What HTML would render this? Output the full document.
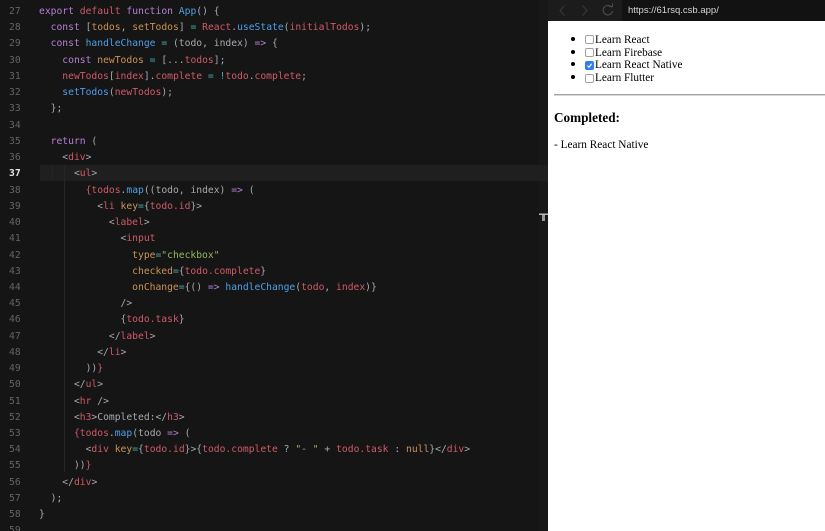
<!DOCTYPE html>
<html><head><meta charset="utf-8"><style>
html,body{margin:0;padding:0;width:825px;height:531px;overflow:hidden;background:#151516}
#ed{position:absolute;left:0;top:0;width:548px;height:531px;background:#151516;overflow:hidden}
.strip{position:absolute;left:539px;top:0;width:9px;height:531px;background:#181819}
.act{position:absolute;left:40px;top:164.5px;width:508px;height:16px;background:#1f1f20}
.g{position:absolute;width:1px;background:#262627}
.n,.l{position:absolute;font:9.68px/16px "DejaVu Sans Mono","Liberation Mono",monospace;white-space:pre;color:#a6aaaf;filter:blur(.25px)}
.n{left:9px;color:#626467}
.l{left:39px}
.k{color:#b77fd6}.r{color:#cf5a66}.o{color:#cc9255}.b{color:#4f9fe8}.t{color:#45aaa5}.s{color:#96b860}
#br{position:absolute;left:548px;top:0;width:277px;height:531px;background:#fff}
#bar{position:absolute;left:0;top:0;width:277px;height:21px;background:#1c1c1d}
#url{position:absolute;left:74px;top:0;width:203px;height:21px;background:#121213;color:#d4d5d6;font:9.5px/21px "Liberation Sans",sans-serif;text-indent:6px}
#pg{position:absolute;left:0;top:21px;width:277px;font-family:"Liberation Serif",serif;color:#000}
.li{position:absolute;left:47px;font-size:11.25px;line-height:13px;white-space:pre;filter:blur(.2px)}
.dot{position:absolute;left:23px;width:4px;height:4px;border-radius:50%;background:#000}
.cb{position:absolute;left:36.5px;width:7px;height:7px;border:.8px solid #a2a2a2;border-radius:2px;background:#fff}
.cb.on{background:#2f7ff0;border-color:#2f7ff0}
</style></head><body>
<div id="ed">
<div class="strip"></div>
<div class="act"></div>
<div class="g" style="left:52px;top:165px;height:15px"></div>
<div class="g" style="left:64px;top:165px;height:307px"></div>
<svg style="position:absolute;left:539px;top:213px" width="9" height="9"><path d="M0 1.2H9" stroke="#ddd" stroke-width="1.2"/><path d="M4.5 1.5V8" stroke="#999" stroke-width="3"/></svg>
<div class="n" style="top:4px">27</div><div class="l" style="top:4px"><span class="k">export</span> <span class="r">default</span> <span class="k">function</span> <span class="b">App</span>() {</div>
<div class="n" style="top:20px">28</div><div class="l" style="top:20px">  <span class="k">const</span> [<span class="o">todos</span>, <span class="o">setTodos</span>] <span class="t">=</span> <span class="r">React</span>.<span class="b">useState</span>(<span class="r">initialTodos</span>);</div>
<div class="n" style="top:36px">29</div><div class="l" style="top:36px">  <span class="k">const</span> <span class="b">handleChange</span> <span class="t">=</span> (todo, index) <span class="k">=&gt;</span> {</div>
<div class="n" style="top:53px">30</div><div class="l" style="top:53px">    <span class="k">const</span> <span class="o">newTodos</span> <span class="t">=</span> [...<span class="r">todos</span>];</div>
<div class="n" style="top:69px">31</div><div class="l" style="top:69px">    <span class="r">newTodos</span>[<span class="r">index</span>].<span class="r">complete</span> <span class="t">=</span> <span class="t">!</span><span class="r">todo</span>.<span class="r">complete</span>;</div>
<div class="n" style="top:85px">32</div><div class="l" style="top:85px">    <span class="b">setTodos</span>(<span class="r">newTodos</span>);</div>
<div class="n" style="top:101px">33</div><div class="l" style="top:101px">  };</div>
<div class="n" style="top:118px">34</div>
<div class="n" style="top:134px">35</div><div class="l" style="top:134px">  <span class="k">return</span> (</div>
<div class="n" style="top:150px">36</div><div class="l" style="top:150px">    &lt;<span class="r">div</span>&gt;</div>
<div class="n" style="top:166px;color:#e4e4e4;font-weight:bold">37</div><div class="l" style="top:166px">      &lt;<span class="r">ul</span>&gt;</div>
<div class="n" style="top:183px">38</div><div class="l" style="top:183px">        <span class="r">{todos</span>.<span class="b">map</span>((todo, index) <span class="k">=&gt;</span> (</div>
<div class="n" style="top:199px">39</div><div class="l" style="top:199px">          &lt;<span class="r">li</span> <span class="o">key</span><span class="t">=</span>{<span class="r">todo.id</span>}&gt;</div>
<div class="n" style="top:215px">40</div><div class="l" style="top:215px">            &lt;<span class="r">label</span>&gt;</div>
<div class="n" style="top:231px">41</div><div class="l" style="top:231px">              &lt;<span class="r">input</span></div>
<div class="n" style="top:248px">42</div><div class="l" style="top:248px">                <span class="o">type</span><span class="t">=</span><span class="s">"checkbox"</span></div>
<div class="n" style="top:264px">43</div><div class="l" style="top:264px">                <span class="o">checked</span><span class="t">=</span>{<span class="r">todo.complete</span>}</div>
<div class="n" style="top:280px">44</div><div class="l" style="top:280px">                <span class="o">onChange</span><span class="t">=</span>{() <span class="k">=&gt;</span> <span class="b">handleChange</span>(<span class="r">todo</span>, <span class="r">index</span>)}</div>
<div class="n" style="top:296px">45</div><div class="l" style="top:296px">              /&gt;</div>
<div class="n" style="top:312px">46</div><div class="l" style="top:312px">              {<span class="r">todo.task</span>}</div>
<div class="n" style="top:329px">47</div><div class="l" style="top:329px">            &lt;/<span class="r">label</span>&gt;</div>
<div class="n" style="top:345px">48</div><div class="l" style="top:345px">          &lt;/<span class="r">li</span>&gt;</div>
<div class="n" style="top:361px">49</div><div class="l" style="top:361px">        ))<span class="r">}</span></div>
<div class="n" style="top:377px">50</div><div class="l" style="top:377px">      &lt;/<span class="r">ul</span>&gt;</div>
<div class="n" style="top:394px">51</div><div class="l" style="top:394px">      &lt;<span class="r">hr</span> /&gt;</div>
<div class="n" style="top:410px">52</div><div class="l" style="top:410px">      &lt;<span class="r">h3</span>&gt;Completed:&lt;/<span class="r">h3</span>&gt;</div>
<div class="n" style="top:426px">53</div><div class="l" style="top:426px">      <span class="r">{todos</span>.<span class="b">map</span>(todo <span class="k">=&gt;</span> (</div>
<div class="n" style="top:442px">54</div><div class="l" style="top:442px">        &lt;<span class="r">div</span> <span class="o">key</span><span class="t">=</span>{<span class="r">todo.id</span>}&gt;{<span class="r">todo.complete</span> ? <span class="s">"- "</span> + <span class="r">todo.task</span> : <span class="o">null</span>}&lt;/<span class="r">div</span>&gt;</div>
<div class="n" style="top:458px">55</div><div class="l" style="top:458px">      ))<span class="r">}</span></div>
<div class="n" style="top:475px">56</div><div class="l" style="top:475px">    &lt;/<span class="r">div</span>&gt;</div>
<div class="n" style="top:491px">57</div><div class="l" style="top:491px">  );</div>
<div class="n" style="top:507px">58</div><div class="l" style="top:507px">}</div>
<div class="n" style="top:523px">59</div>
</div>
<div id="br">
<div id="bar">
<svg style="position:absolute;left:8px;top:3px" width="62" height="15" fill="none" stroke-width="1.1">
<path d="M8.5 2.5L4 7.5L8.5 12.5" stroke="#383839"/>
<path d="M26.5 2.5L31 7.5L26.5 12.5" stroke="#383839"/>
<path d="M55.5 4.2A4.7 4.7 0 1 0 56.5 8" stroke="#4c4c4d"/>
<path d="M53 3.6H56.5V.5" stroke="#4c4c4d"/>
</svg>
<div id="url">https://61rsq.csb.app/</div>
</div>
<div id="pg">
<div class="dot" style="top:16px"></div><div class="cb" style="top:14px"></div><div class="li" style="top:13px">Learn React</div>
<div class="dot" style="top:29px"></div><div class="cb" style="top:27px"></div><div class="li" style="top:26px">Learn Firebase</div>
<div class="dot" style="top:41px"></div><div class="cb on" style="top:40px"><svg style="position:absolute;left:0;top:0" width="7" height="7"><path d="M1.5 3.6L3 5.2L5.6 1.8" stroke="#fff" stroke-width="1.2" fill="none"/></svg></div><div class="li" style="top:38px">Learn React Native</div>
<div class="dot" style="top:54px"></div><div class="cb" style="top:53px"></div><div class="li" style="top:51px">Learn Flutter</div>
<div style="position:absolute;left:6px;top:73px;width:271px;height:1px;background:#a4a4a4;border-bottom:1px solid #d8d8d8"></div>
<div style="position:absolute;left:6px;top:89px;font-size:13.2px;line-height:16px;font-weight:bold;filter:blur(.2px)">Completed:</div>
<div style="position:absolute;left:6px;top:117px;font-size:11.3px;line-height:14px;white-space:pre;filter:blur(.2px)">- Learn React Native</div>
</div>
</div>
</body></html>
